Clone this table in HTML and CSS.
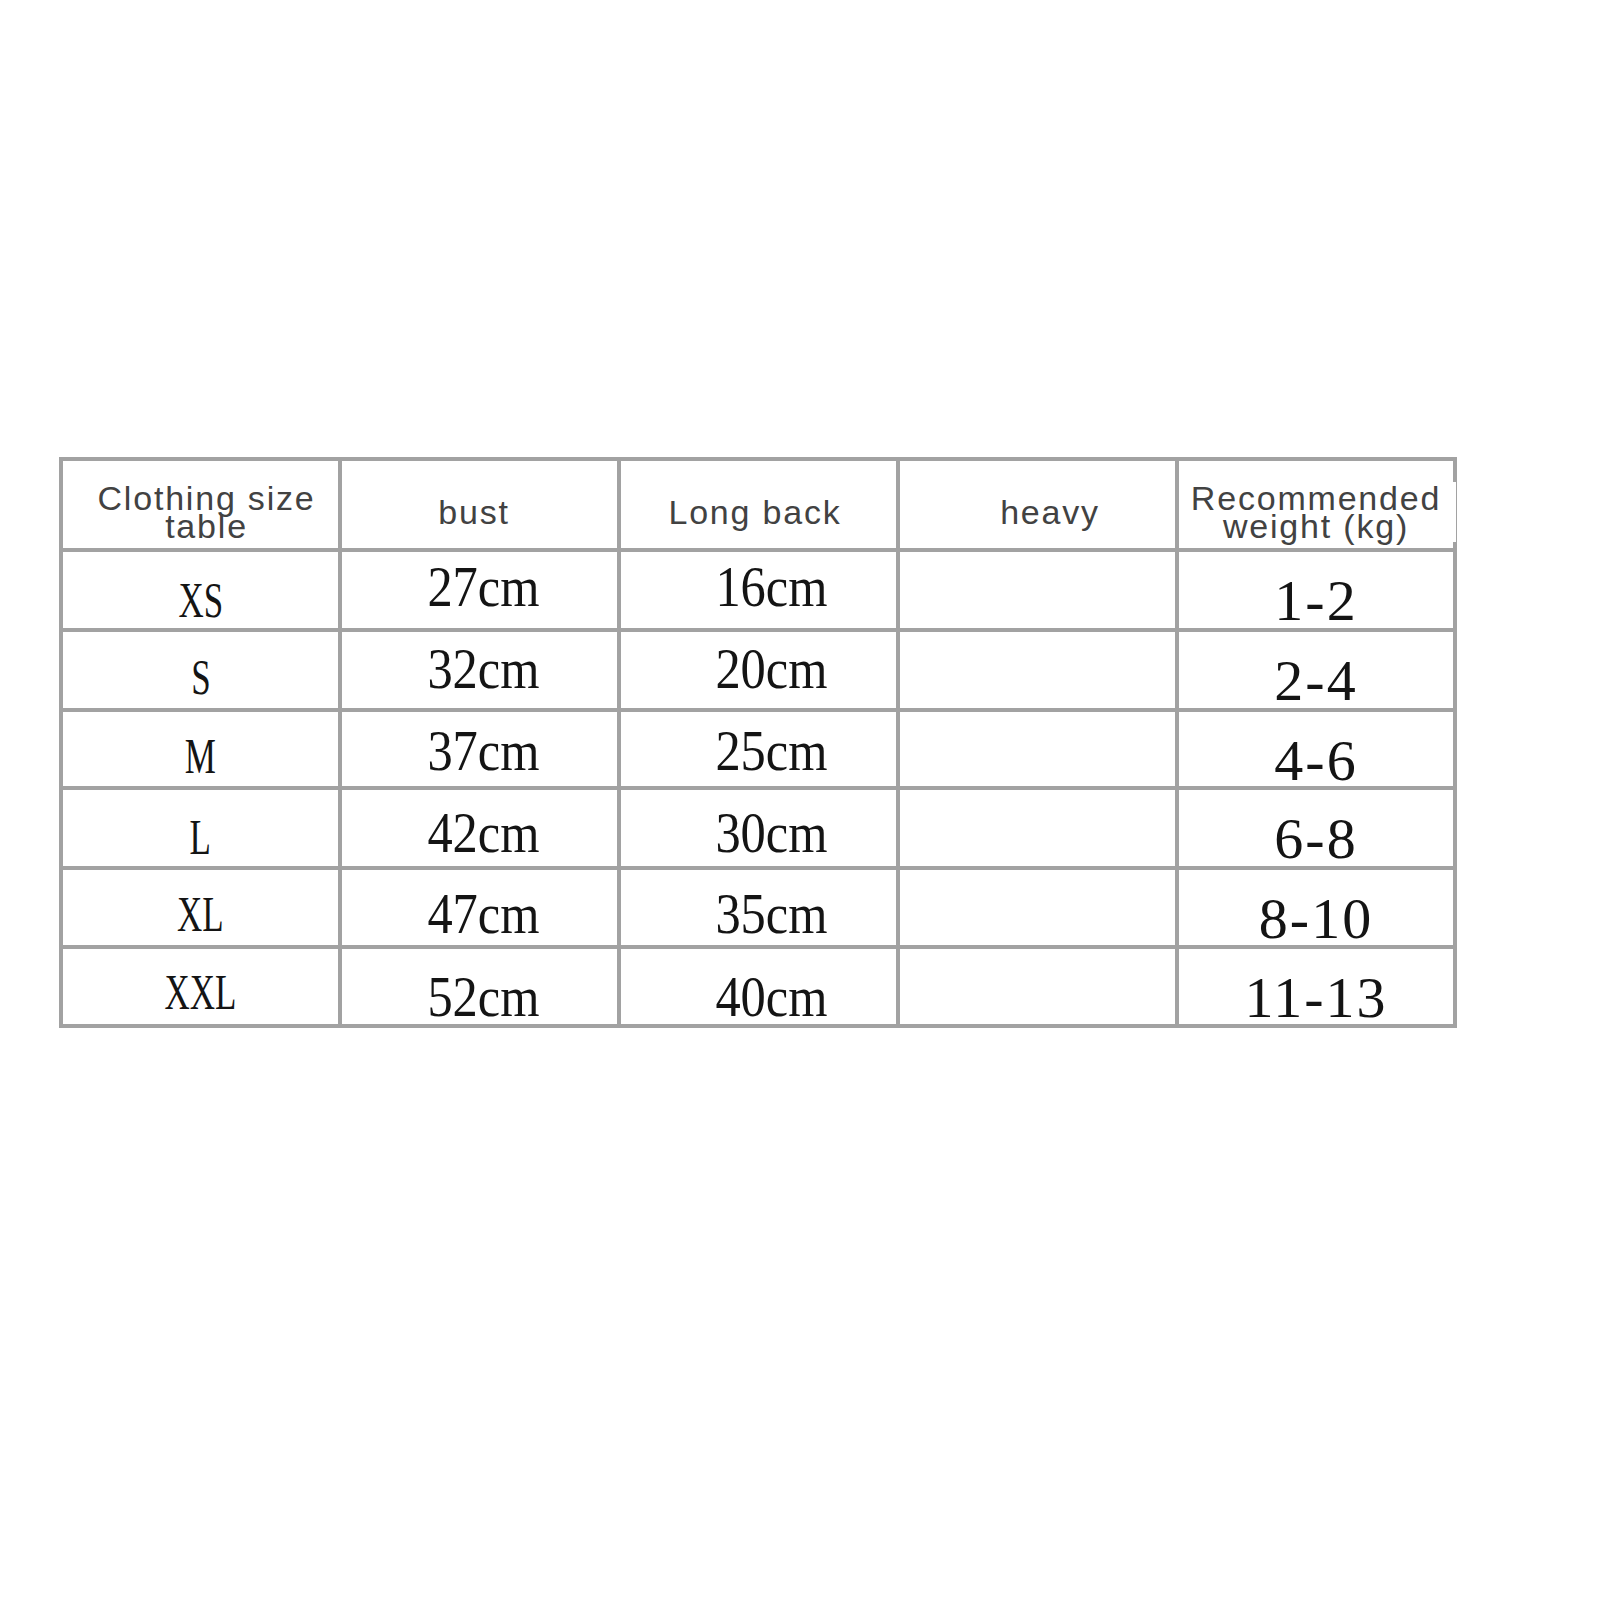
FILE: index.html
```html
<!DOCTYPE html>
<html lang="en">
<head>
<meta charset="utf-8">
<title>Clothing size table</title>
<link rel="stylesheet" href="styles.css">
</head>
<body>
<div class="page">
  <div class="sheet" role="table">
    <div class="row head" role="row">
      <div class="cell h h1" role="columnheader">Clothing size<br>table</div>
      <div class="cell h h2" role="columnheader">bust</div>
      <div class="cell h h3" role="columnheader">Long back</div>
      <div class="cell h h4" role="columnheader">heavy</div>
      <div class="cell h h5" role="columnheader">Recommended<br>weight (kg)</div>
    </div>
    <div class="row r1" role="row">
      <div class="cell n c1"><span>XS</span></div>
      <div class="cell n c2"><span>27cm</span></div>
      <div class="cell n c3"><span>16cm</span></div>
      <div class="cell n c4"></div>
      <div class="cell n c5"><span>1-2</span></div>
    </div>
    <div class="row r2" role="row">
      <div class="cell n c1"><span>S</span></div>
      <div class="cell n c2"><span>32cm</span></div>
      <div class="cell n c3"><span>20cm</span></div>
      <div class="cell n c4"></div>
      <div class="cell n c5"><span>2-4</span></div>
    </div>
    <div class="row r3" role="row">
      <div class="cell n c1"><span>M</span></div>
      <div class="cell n c2"><span>37cm</span></div>
      <div class="cell n c3"><span>25cm</span></div>
      <div class="cell n c4"></div>
      <div class="cell n c5"><span>4-6</span></div>
    </div>
    <div class="row r4" role="row">
      <div class="cell n c1"><span>L</span></div>
      <div class="cell n c2"><span>42cm</span></div>
      <div class="cell n c3"><span>30cm</span></div>
      <div class="cell n c4"></div>
      <div class="cell n c5"><span>6-8</span></div>
    </div>
    <div class="row r5" role="row">
      <div class="cell n c1"><span>XL</span></div>
      <div class="cell n c2"><span>47cm</span></div>
      <div class="cell n c3"><span>35cm</span></div>
      <div class="cell n c4"></div>
      <div class="cell n c5"><span>8-10</span></div>
    </div>
    <div class="row r6" role="row">
      <div class="cell n c1"><span>XXL</span></div>
      <div class="cell n c2"><span>52cm</span></div>
      <div class="cell n c3"><span>40cm</span></div>
      <div class="cell n c4"></div>
      <div class="cell n c5"><span>11-13</span></div>
    </div>
  </div>
</div>
</body>
</html>
```

FILE: styles.css
```css
html, body {
  margin: 0;
  background: #ffffff;
}

.page {
  padding: 457px 0 0 59px;
}

.sheet {
  display: grid;
  grid-template-columns: 275px 275px 275px 275px 274px;
  grid-template-rows: 87px 76px 76px 74px 76px 75px 75px;
  gap: 4px;
  padding: 4px;
  width: max-content;
  background: #a2a2a2;
}

.row {
  display: contents;
}

.r1 { --p1: 23px; --p2: 6px; }
.r2 { --p1: 20px; --p2: 8px; }
.r3 { --p1: 19px; --p2: 10px; }
.r4 { --p1: 22px; --p2: 14px; }
.r5 { --p1: 19px; --p2: 15px; }
.r6 { --p1: 18px; --p2: 19px; }

.cell {
  background: #ffffff;
  box-sizing: border-box;
  overflow: visible;
}

/* header */
.h {
  display: flex;
  align-items: center;
  justify-content: center;
  text-align: center;
  padding-top: 15px;
  font-family: "Liberation Sans", Arial, sans-serif;
  font-size: 34px;
  line-height: 28px;
  letter-spacing: 1.8px;
  color: #424242;
}

.h1 { padding-left: 12px; }
.h2 { padding-right: 11px; }
.h3 { padding-right: 7px; }
.h4 { padding-left: 25px; }

.h5 {
  position: relative;
}

/* small white gap over the right border, as in the source image */
.h5::after {
  content: "";
  position: absolute;
  right: -3px;
  top: 21px;
  width: 3px;
  height: 60px;
  background: #ffffff;
}

/* body */
.n {
  font-family: "Liberation Serif", "Times New Roman", serif;
  font-size: 58px;
  line-height: 58px;
  text-align: center;
  color: #141414;
}

.n span {
  display: inline-block;
  transform-origin: center;
}

.c1 {
  font-size: 50px;
  line-height: 50px;
  padding-top: var(--p1);
}

.c1 span {
  transform: scaleX(0.7);
}

.c2 {
  padding-top: var(--p2);
  padding-left: 8px;
}

.c3 {
  padding-top: var(--p2);
  padding-left: 26px;
}

.c2 span,
.c3 span {
  transform: scaleX(0.87);
}

.c5 {
  padding-top: 20px;
  letter-spacing: 2px;
}
```
